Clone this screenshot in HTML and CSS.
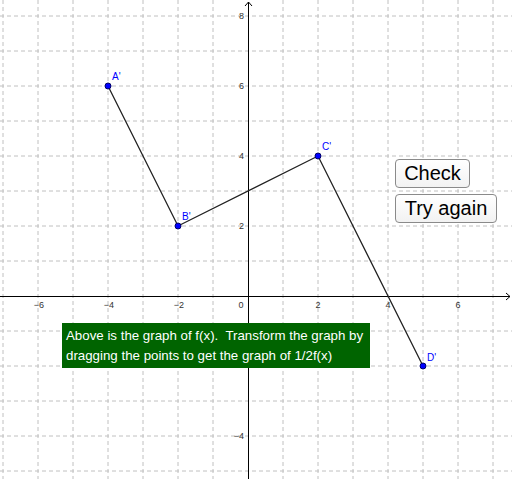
FILE: index.html
```html
<!DOCTYPE html>
<html>
<head>
<meta charset="utf-8">
<link rel="stylesheet" href="styles.css">
</head>
<body>
<div class="applet">
  <svg class="graph" width="512" height="479" viewBox="0 0 512 479">
    <g class="grid">
      <line x1="3" y1="0" x2="3" y2="479"/>
      <line x1="38" y1="0" x2="38" y2="479"/>
      <line x1="73" y1="0" x2="73" y2="479"/>
      <line x1="108" y1="0" x2="108" y2="479"/>
      <line x1="143" y1="0" x2="143" y2="479"/>
      <line x1="178" y1="0" x2="178" y2="479"/>
      <line x1="213" y1="0" x2="213" y2="479"/>
      <line x1="283" y1="0" x2="283" y2="479"/>
      <line x1="318" y1="0" x2="318" y2="479"/>
      <line x1="353" y1="0" x2="353" y2="479"/>
      <line x1="388" y1="0" x2="388" y2="479"/>
      <line x1="423" y1="0" x2="423" y2="479"/>
      <line x1="458" y1="0" x2="458" y2="479"/>
      <line x1="493" y1="0" x2="493" y2="479"/>
      <line x1="0" y1="16" x2="512" y2="16"/>
      <line x1="0" y1="51" x2="512" y2="51"/>
      <line x1="0" y1="86" x2="512" y2="86"/>
      <line x1="0" y1="121" x2="512" y2="121"/>
      <line x1="0" y1="156" x2="512" y2="156"/>
      <line x1="0" y1="191" x2="512" y2="191"/>
      <line x1="0" y1="226" x2="512" y2="226"/>
      <line x1="0" y1="261" x2="512" y2="261"/>
      <line x1="0" y1="331" x2="512" y2="331"/>
      <line x1="0" y1="366" x2="512" y2="366"/>
      <line x1="0" y1="401" x2="512" y2="401"/>
      <line x1="0" y1="436" x2="512" y2="436"/>
      <line x1="0" y1="471" x2="512" y2="471"/>
    </g>
    <g class="axes">
      <line x1="0" y1="296.5" x2="510" y2="296.5"/>
      <line x1="248.5" y1="479" x2="248.5" y2="2"/>
      <polyline points="245,6 248.5,2 252,6"/>
      <polyline points="506,293 510,296.5 506,300"/>
    </g>
    <g class="ticks">
      <text x="39" y="308" text-anchor="middle">−6</text>
      <text x="109" y="308" text-anchor="middle">−4</text>
      <text x="179" y="308" text-anchor="middle">−2</text>
      <text x="241" y="308" text-anchor="middle">0</text>
      <text x="318" y="308" text-anchor="middle">2</text>
      <text x="388" y="308" text-anchor="middle">4</text>
      <text x="458" y="308" text-anchor="middle">6</text>
      <text x="244" y="19" text-anchor="end">8</text>
      <text x="244" y="89" text-anchor="end">6</text>
      <text x="244" y="159" text-anchor="end">4</text>
      <text x="244" y="229" text-anchor="end">2</text>
      <text x="244" y="439" text-anchor="end">−4</text>
    </g>
    <polyline class="path" points="108,86 178,226 318,156 423,366"/>
    <g class="pts">
      <circle cx="108" cy="86" r="3"/>
      <circle cx="178" cy="226" r="3"/>
      <circle cx="318" cy="156" r="3"/>
      <circle cx="423" cy="366" r="3"/>
    </g>
    <g class="labels">
      <text x="112" y="80">A'</text>
      <text x="182" y="220">B'</text>
      <text x="322" y="150">C'</text>
      <text x="427" y="361">D'</text>
    </g>
  </svg>
  <div class="note">Above is the graph of f(x).&nbsp; Transform the graph by<br>dragging the points to get the graph of 1/2f(x)</div>
  <button class="btn btn-check">Check</button>
  <button class="btn btn-try">Try again</button>
</div>
</body>
</html>
```

FILE: styles.css
```css
html, body {
  margin: 0;
  padding: 0;
  background: #ffffff;
}
.applet {
  position: relative;
  width: 512px;
  height: 479px;
  overflow: hidden;
  font-family: "Liberation Sans", Arial, sans-serif;
}
.graph {
  display: block;
}
.grid line {
  stroke: #c0c0c0;
  stroke-width: 1;
  stroke-dasharray: 4 3;
}
.axes line, .axes polyline {
  stroke: #000000;
  stroke-width: 1;
  fill: none;
}
.ticks text {
  font-family: "Liberation Sans", Arial, sans-serif;
  font-size: 9px;
  fill: #333333;
}
.path {
  fill: none;
  stroke: #222222;
  stroke-width: 1.3;
}
.pts circle {
  fill: #0000ff;
  stroke: #000066;
  stroke-width: 1;
}
.labels text {
  font-family: "Liberation Sans", Arial, sans-serif;
  font-size: 10px;
  fill: #0000ff;
}
.note {
  position: absolute;
  left: 62px;
  top: 323px;
  width: 308px;
  height: 45px;
  box-sizing: border-box;
  padding: 3px 0 0 4px;
  background: #006400;
  color: #ffffff;
  font-size: 13.3px;
  line-height: 19.5px;
  white-space: nowrap;
}
.btn {
  position: absolute;
  left: 395px;
  box-sizing: border-box;
  height: 29px;
  padding: 0 6px;
  background: linear-gradient(#ffffff, #f2f2f2);
  border: 1px solid #8a8a8a;
  border-radius: 4px;
  font-family: "Liberation Sans", Arial, sans-serif;
  font-size: 20px;
  color: #000000;
  line-height: 27px;
}
.btn-check {
  top: 159px;
  width: 75px;
}
.btn-try {
  top: 194px;
  width: 102px;
}
```
